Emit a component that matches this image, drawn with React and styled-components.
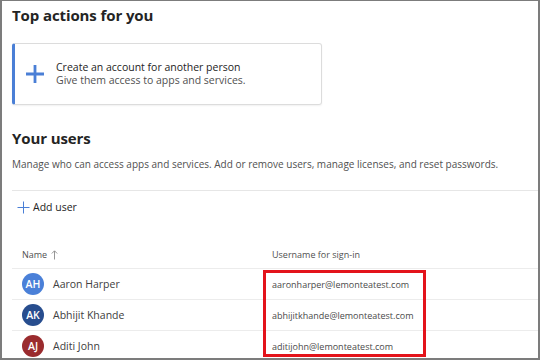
import React from "react"
import styled, { createGlobalStyle } from "styled-components"

const GlobalStyle = createGlobalStyle`
  html, body {
    margin: 0;
    padding: 0;
    background: #ffffff;
  }
  body {
    font-family: "Open Sans", "Noto Sans", Arial, sans-serif;
    color: #242424;
  }
`

const Frame = styled.div`
  box-sizing: border-box;
  width: 540px;
  height: 360px;
  border: 2px solid #7c7c7c;
  border-top-width: 1px;
  overflow: hidden;
  padding: 0 0 0 10px;
`

const Heading = styled.h2`
  margin: 0;
  font-size: 15px;
  font-weight: 700;
  line-height: 20px;
  color: #242424;
  letter-spacing: -0.1px;
`

const TopHeading = styled(Heading)`
  padding-top: 4px;
`

const ActionCard = styled.div`
  box-sizing: border-box;
  width: 310px;
  height: 62px;
  margin-top: 18px;
  display: flex;
  align-items: center;
  gap: 10px;
  border: 1px solid #dcdcdc;
  border-left: 3px solid #4a7fd6;
  border-radius: 3px;
  padding-left: 9px;
  box-shadow: 0 1px 2px rgba(0, 0, 0, 0.06);
`

const PlusIcon = styled.svg`
  flex: none;
  width: 22px;
  height: 22px;
`

const CardText = styled.div`
  display: flex;
  flex-direction: column;
  font-size: 10.5px;
  line-height: 13px;
`

const CardTitle = styled.span`
  color: #242424;
`

const CardSub = styled.span`
  color: #505050;
`

const UsersHeading = styled(Heading)`
  margin-top: 23px;
`

const Description = styled.p`
  margin: 9px 0 0;
  font-size: 10px;
  line-height: 14px;
  color: #505050;
`

const Divider = styled.div`
  height: 1px;
  background: #e6e6e6;
  margin-top: 19px;
`

const AddButton = styled.button`
  display: flex;
  align-items: center;
  gap: 3px;
  margin: 9px 0 0 5px;
  padding: 0;
  border: none;
  background: none;
  font-family: inherit;
  font-size: 10.5px;
  color: #242424;
  line-height: 14px;
`

const Table = styled.div`
  margin-top: 27px;
`

const Row = styled.div`
  display: grid;
  grid-template-columns: 250px 1fr;
  align-items: center;
  height: ${p => (p.header ? "27px" : "30px")};
  border-bottom: 1px solid #ececec;
  padding-left: 10px;
`

const HeaderCell = styled.div`
  display: flex;
  align-items: center;
  gap: 4px;
  font-size: 9px;
  color: #505050;
`

const NameCell = styled.div`
  display: flex;
  align-items: center;
  gap: 9px;
  font-size: 10.5px;
  color: #404040;
`

const Avatar = styled.span`
  width: 22px;
  height: 22px;
  border-radius: 50%;
  background: ${p => p.color};
  color: #ffffff;
  display: flex;
  align-items: center;
  justify-content: center;
  font-size: 10.5px;
  font-weight: 600;
`

const EmailCell = styled.div`
  font-size: 9px;
  color: #4a4a4a;
`

const Highlighted = styled.div`
  position: relative;
`

const RedBox = styled.div`
  position: absolute;
  left: 251px;
  top: 1px;
  width: 163px;
  height: 87px;
  box-sizing: border-box;
  border: 3px solid #e3131b;
  pointer-events: none;
`

const users = [
  { initials: "AH", name: "Aaron Harper", email: "aaronharper@lemonteatest.com", color: "#4a80d8" },
  { initials: "AK", name: "Abhijit Khande", email: "abhijitkhande@lemonteatest.com", color: "#274d8e" },
  { initials: "AJ", name: "Aditi John", email: "aditijohn@lemonteatest.com", color: "#9a2b2e" },
]

export default function App() {
  return (
    <Frame>
      <GlobalStyle />
      <TopHeading>Top actions for you</TopHeading>
      <ActionCard>
        <PlusIcon viewBox="0 0 22 22">
          <path d="M11 2v18M2 11h18" stroke="#4a7fd6" strokeWidth="2.8" />
        </PlusIcon>
        <CardText>
          <CardTitle>Create an account for another person</CardTitle>
          <CardSub>Give them access to apps and services.</CardSub>
        </CardText>
      </ActionCard>
      <UsersHeading>Your users</UsersHeading>
      <Description>
        Manage who can access apps and services. Add or remove users, manage licenses, and reset passwords.
      </Description>
      <Divider />
      <AddButton>
        <svg width="13" height="13" viewBox="0 0 13 13">
          <path d="M6.5 0.5v12M0.5 6.5h12" stroke="#4a7fd6" strokeWidth="1" />
        </svg>
        Add user
      </AddButton>
      <Table>
        <Row header>
          <HeaderCell>
            Name
            <svg width="7" height="10" viewBox="0 0 7 10">
              <path d="M3.5 9.5V1M0.8 3.5L3.5 0.8 6.2 3.5" stroke="#8a8a8a" strokeWidth="0.9" fill="none" />
            </svg>
          </HeaderCell>
          <HeaderCell>Username for sign-in</HeaderCell>
        </Row>
        <Highlighted>
          {users.map(u => (
            <Row key={u.email}>
              <NameCell>
                <Avatar color={u.color}>{u.initials}</Avatar>
                {u.name}
              </NameCell>
              <EmailCell>{u.email}</EmailCell>
            </Row>
          ))}
          <RedBox />
        </Highlighted>
      </Table>
    </Frame>
  )
}
